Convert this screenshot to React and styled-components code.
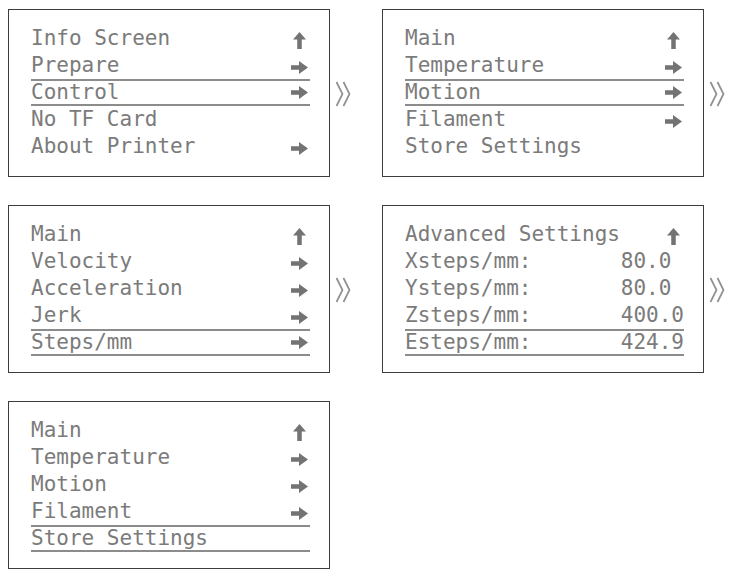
import React from 'react'
import styled, { createGlobalStyle } from 'styled-components'

const GlobalStyle = createGlobalStyle`
    body {
        margin: 0;
        background: #ffffff;
    }
`

const Page = styled.div`
    display: grid;
    grid-template-columns: 322px 52px 322px 40px;
    grid-auto-rows: 168px;
    row-gap: 28px;
    padding: 9px 0 0 8px;
    font-family: "DejaVu Sans Mono", "Liberation Mono", monospace;
`

const Screen = styled.div`
    box-sizing: border-box;
    border: 1px solid #3c3c3c;
    padding: 15px 19px 0 22px;
    display: flex;
    flex-direction: column;
`

const Row = styled.div`
    box-sizing: border-box;
    height: 27px;
    display: flex;
    align-items: center;
    justify-content: space-between;
    font-size: 21px;
    color: #7b7b7b;
    white-space: pre;
    border-top: 2px solid ${props => props.selected ? '#8c8c8c' : 'transparent'};
    border-bottom: 2px solid ${props => props.selected ? '#8c8c8c' : 'transparent'};
`

const Label = styled.span`
    line-height: 1;
`

const Value = styled.span`
    line-height: 1;
`

const IconSlot = styled.span`
    display: flex;
    width: 18px;
    justify-content: center;
    margin-right: 2px;
    margin-top: ${props => props.shift}px;
`

const Sep = styled.div`
    display: flex;
    align-items: center;
    padding-left: 5px;
    padding-top: 2px;
`

const RightArrow = () => (
    <svg width="17" height="13" viewBox="0 0 17 13">
        <rect x="0" y="4.25" width="9" height="4.5" fill="#737373" />
        <polygon points="8,0 17,6.5 8,13" fill="#737373" />
    </svg>
)

const UpArrow = () => (
    <svg width="13" height="17" viewBox="0 0 13 17">
        <polygon points="0,7.5 6.5,0 13,7.5" fill="#737373" />
        <rect x="4.25" y="6" width="4.5" height="11" fill="#737373" />
    </svg>
)

const Chevrons = () => (
    <svg width="18" height="26" viewBox="0 0 18 26">
        <polyline points="1.5,1 7.5,13 1.5,25" fill="none" stroke="#8f8f8f" strokeWidth="1.7" />
        <polyline points="8.5,1 14.5,13 8.5,25" fill="none" stroke="#8f8f8f" strokeWidth="1.7" />
    </svg>
)

const screens = [
    {
        sel: 2,
        rows: [
            { label: 'Info Screen', icon: 'up' },
            { label: 'Prepare', icon: 'right' },
            { label: 'Control', icon: 'right' },
            { label: 'No TF Card' },
            { label: 'About Printer', icon: 'right' },
        ],
    },
    {
        sel: 2,
        rows: [
            { label: 'Main', icon: 'up' },
            { label: 'Temperature', icon: 'right' },
            { label: 'Motion', icon: 'right' },
            { label: 'Filament', icon: 'right' },
            { label: 'Store Settings' },
        ],
    },
    {
        sel: 4,
        rows: [
            { label: 'Main', icon: 'up' },
            { label: 'Velocity', icon: 'right' },
            { label: 'Acceleration', icon: 'right' },
            { label: 'Jerk', icon: 'right' },
            { label: 'Steps/mm', icon: 'right' },
        ],
    },
    {
        sel: 4,
        rows: [
            { label: 'Advanced Settings', icon: 'up' },
            { label: 'Xsteps/mm:', value: '80.0 ' },
            { label: 'Ysteps/mm:', value: '80.0 ' },
            { label: 'Zsteps/mm:', value: '400.0' },
            { label: 'Esteps/mm:', value: '424.9' },
        ],
    },
    {
        sel: 4,
        rows: [
            { label: 'Main', icon: 'up' },
            { label: 'Temperature', icon: 'right' },
            { label: 'Motion', icon: 'right' },
            { label: 'Filament', icon: 'right' },
            { label: 'Store Settings' },
        ],
    },
]

const MenuScreen = ({ data }) => (
    <Screen>
        {data.rows.map((row, i) => (
            <Row key={i} selected={i === data.sel}>
                <Label>{row.label}</Label>
                {row.value && <Value>{row.value}</Value>}
                {row.icon && (
                    <IconSlot shift={i === data.sel ? 0 : 4}>
                        {row.icon === 'up' ? <UpArrow /> : <RightArrow />}
                    </IconSlot>
                )}
            </Row>
        ))}
    </Screen>
)

const App = () => {
    return (
        <>
            <GlobalStyle />
            <Page>
                {screens.map((s, i) => (
                    <React.Fragment key={i}>
                        <MenuScreen data={s} />
                        {i < 4 && <Sep><Chevrons /></Sep>}
                    </React.Fragment>
                ))}
            </Page>
        </>
    )
}

export default App
